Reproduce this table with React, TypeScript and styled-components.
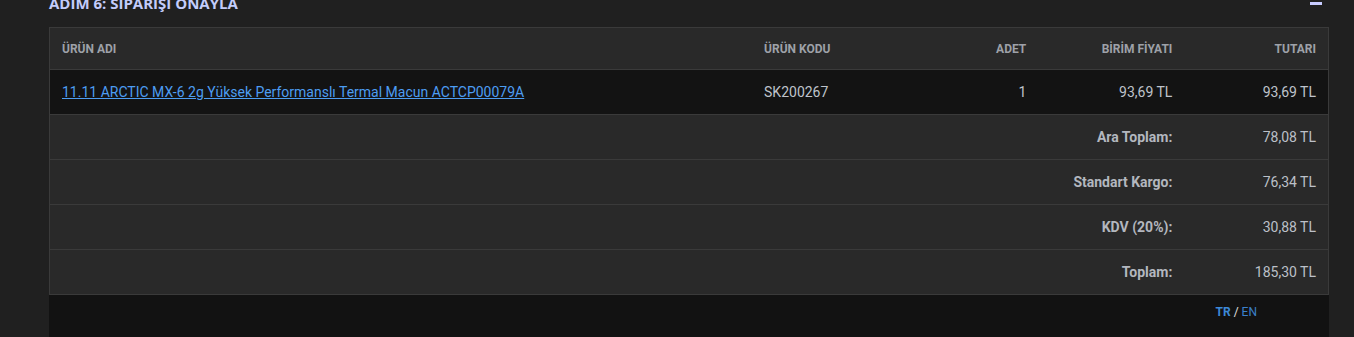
import styled, { createGlobalStyle } from 'styled-components';

const GlobalStyle = createGlobalStyle`
  html, body {
    margin: 0;
    padding: 0;
    background: #202020;
    overflow: hidden;
  }
`;

type Align = 'left' | 'right';

const columns: { label: string; align: Align; width: number }[] = [
  { label: 'ÜRÜN ADI', align: 'left', width: 702 },
  { label: 'ÜRÜN KODU', align: 'left', width: 143 },
  { label: 'ADET', align: 'right', width: 143 },
  { label: 'BİRİM FİYATI', align: 'right', width: 146 },
  { label: 'TUTARI', align: 'right', width: 144 },
];

const totals = [
  { label: 'Ara Toplam:', value: '78,08 TL' },
  { label: 'Standart Kargo:', value: '76,34 TL' },
  { label: 'KDV (20%):', value: '30,88 TL' },
  { label: 'Toplam:', value: '185,30 TL' },
];

export default function App() {
  return (
    <Page>
      <GlobalStyle />
      <Section>
        <SectionHeader>
          <Title>ADIM 6: SİPARİŞİ ONAYLA</Title>
          <CollapseIcon aria-label="Daralt" />
        </SectionHeader>

        <OrderTable>
          <colgroup>
            {columns.map((c) => (
              <col key={c.label} style={{ width: c.width }} />
            ))}
          </colgroup>
          <thead>
            <tr>
              {columns.map((c) => (
                <HeadCell key={c.label} $align={c.align}>
                  {c.label}
                </HeadCell>
              ))}
            </tr>
          </thead>
          <tbody>
            <ProductRow>
              <Cell $align="left">
                <ProductLink href="#">11.11 ARCTIC MX-6 2g Yüksek Performanslı Termal Macun ACTCP00079A</ProductLink>
              </Cell>
              <Cell $align="left">SK200267</Cell>
              <Cell $align="right">1</Cell>
              <Cell $align="right">93,69 TL</Cell>
              <Cell $align="right">93,69 TL</Cell>
            </ProductRow>
            {totals.map((t) => (
              <tr key={t.label}>
                <LabelCell colSpan={4}>{t.label}</LabelCell>
                <ValueCell>{t.value}</ValueCell>
              </tr>
            ))}
          </tbody>
        </OrderTable>

        <Footer>
          <LangSwitch>
            <LangLink href="#" $active>
              TR
            </LangLink>
            <Slash>/</Slash>
            <LangLink href="#">EN</LangLink>
          </LangSwitch>
        </Footer>
      </Section>
    </Page>
  );
}

const Page = styled.div`
  padding-left: 49px;
  font-family: Roboto, 'Liberation Sans', sans-serif;
`;

const Section = styled.section`
  width: 1280px;
`;

const SectionHeader = styled.div`
  display: flex;
  align-items: center;
  justify-content: space-between;
  height: 20px;
  margin-top: -7px;
  margin-bottom: 14px;
  padding-right: 7px;
`;

const Title = styled.h2`
  margin: 0;
  font-family: 'Open Sans', 'Liberation Sans', sans-serif;
  font-size: 15px;
  font-weight: 700;
  line-height: 20px;
  color: #c3ccfb;
`;

const CollapseIcon = styled.span`
  display: block;
  width: 12px;
  height: 3px;
  margin-top: 1px;
  background: #c8ccff;
`;

const OrderTable = styled.table`
  width: 1280px;
  table-layout: fixed;
  border-collapse: collapse;
  background: #292929;
  border: 1px solid #3a3a3a;
`;

const HeadCell = styled.th<{ $align: Align }>`
  height: 41px;
  padding: 0 12px;
  text-align: ${({ $align }) => $align};
  font-size: 12px;
  font-weight: 700;
  color: #9ea1a8;
  border-bottom: 1px solid #3a3a3a;
`;

const ProductRow = styled.tr`
  background: #131313;
`;

const Cell = styled.td<{ $align: Align }>`
  height: 44px;
  padding: 0 12px;
  text-align: ${({ $align }) => $align};
  font-size: 14px;
  color: #bfc3cb;
  border-bottom: 1px solid #3a3a3a;
`;

const ProductLink = styled.a`
  color: #4d9df2;
  text-decoration: underline;
`;

const LabelCell = styled.td`
  height: 44px;
  padding: 0 12px;
  text-align: right;
  font-size: 14px;
  font-weight: 700;
  color: #b3b7bf;
  border-bottom: 1px solid #3a3a3a;
`;

const ValueCell = styled(LabelCell)`
  font-weight: 400;
  color: #bcc0c8;
`;

const Footer = styled.div`
  display: flex;
  justify-content: flex-end;
  height: 60px;
  padding: 9px 72px 0 0;
  box-sizing: border-box;
  background: #121212;
`;

const LangSwitch = styled.div`
  display: flex;
  align-items: baseline;
  gap: 3px;
  font-size: 12px;
  line-height: 16px;
`;

const LangLink = styled.a<{ $active?: boolean }>`
  color: ${({ $active }) => ($active ? '#3d89d8' : '#3b80cc')};
  font-weight: ${({ $active }) => ($active ? 700 : 400)};
  text-decoration: none;
`;

const Slash = styled.span`
  color: #e0e0e0;
`;
